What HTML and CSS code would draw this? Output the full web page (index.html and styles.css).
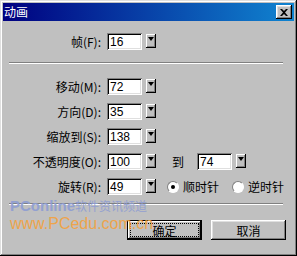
FILE: index.html
```html
<!DOCTYPE html>
<html>
  <head>
    <meta charset="utf-8" />
    <title>动画</title>
    <link rel="stylesheet" href="styles.css">
  </head>
  <body>
    <div class="window">
      <div class="titlebar">
        <span class="title">动画</span>
        <span class="close">
          <svg width="8" height="7" viewBox="0 0 8 7">
            <path d="M0 0h2l2 2 2-2h2L5 3.5 8 7H6L4 5 2 7H0l3-3.5z" fill="#000" />
          </svg>
        </span>
      </div>

      <div class="content">
        <div class="row first">
          <label class="lbl">帧(F):</label>
          <span class="field">16</span>
          <span class="drop"><i></i></span>
        </div>

        <div class="sep top-sep"></div>

        <div class="row">
          <label class="lbl">移动(M):</label>
          <span class="field">72</span>
          <span class="drop"><i></i></span>
        </div>
        <div class="row">
          <label class="lbl">方向(D):</label>
          <span class="field">35</span>
          <span class="drop"><i></i></span>
        </div>
        <div class="row">
          <label class="lbl">缩放到(S):</label>
          <span class="field">138</span>
          <span class="drop"><i></i></span>
        </div>
        <div class="row opacity">
          <label class="lbl">不透明度(O):</label>
          <span class="field">100</span>
          <span class="drop"><i></i></span>
          <span class="to">到</span>
          <span class="field">74</span>
          <span class="drop"><i></i></span>
        </div>
        <div class="row">
          <label class="lbl">旋转(R):</label>
          <span class="field">49</span>
          <span class="drop"><i></i></span>
          <span class="radio checked first-radio"></span>
          <span class="radio-text">顺时针</span>
          <span class="radio second-radio"></span>
          <span class="radio-text">逆时针</span>
        </div>

        <div class="sep bottom-sep"></div>

        <div class="buttons">
          <button class="btn default"><span>确定</span></button>
          <button class="btn">取消</button>
        </div>
      </div>

      <div class="mark">
        <div class="mark-1">PConline<span class="cjk">软件资讯频道</span></div>
        <div class="mark-2">www.PCedu.com.cn</div>
      </div>
    </div>
  </body>
</html>
```

FILE: styles.css
```css
* {
  box-sizing: border-box;
}

body {
  margin: 0;
  font-family: "Liberation Sans", "Noto Sans CJK SC", sans-serif;
  font-size: 12px;
}

.window {
  position: relative;
  width: 297px;
  height: 256px;
  padding: 3px;
  background: #c0c0c0;
  box-shadow: inset -1px -1px #000, inset 1px 1px #dfdfdf,
    inset -2px -2px #808080, inset 2px 2px #fff;
}

.titlebar {
  height: 18px;
  display: flex;
  align-items: center;
  justify-content: space-between;
  padding: 0 2px 0 1px;
  background: linear-gradient(to right, #000080, #1084d0);
  color: #fff;
}

.title {
  font-family: "Noto Sans CJK SC", sans-serif;
  font-size: 12px;
  line-height: 14px;
}

.close {
  width: 16px;
  height: 14px;
  display: flex;
  align-items: center;
  justify-content: center;
  background: #c0c0c0;
  box-shadow: inset -1px -1px #000, inset 1px 1px #fff,
    inset -2px -2px #808080, inset 2px 2px #dfdfdf;
}

.content {
  padding-top: 12px;
}

.row {
  display: flex;
  align-items: flex-start;
  height: 17px;
  margin-bottom: 8px;
}

.row.opacity {
  margin-top: 2px;
}

.lbl {
  width: 98px;
  margin-right: 6px;
  text-align: right;
  font-family: "Noto Sans CJK SC", sans-serif;
  line-height: 17px;
  color: #000;
}

.field {
  width: 35px;
  height: 17px;
  padding: 2px 0 0 3px;
  background: #fff;
  line-height: 14px;
  box-shadow: inset 1px 1px #808080, inset -1px -1px #fff,
    inset 2px 2px #000, inset -2px -2px #dfdfdf;
}

.drop {
  width: 10px;
  height: 14px;
  margin: 1px 0 0 4px;
  display: flex;
  justify-content: center;
  padding-top: 3px;
  background: #c0c0c0;
  box-shadow: inset -1px -1px #000, inset 1px 1px #fff,
    inset -2px -2px #808080;
}

.drop i {
  width: 0;
  height: 0;
  border-left: 3px solid transparent;
  border-right: 3px solid transparent;
  border-top: 4px solid #000;
}

.to {
  margin: 0 13px 0 16px;
  font-family: "Noto Sans CJK SC", sans-serif;
  line-height: 17px;
}

.radio {
  width: 12px;
  height: 12px;
  margin-top: 3px;
  border-radius: 50%;
  background: #fff;
  border: 1px solid;
  border-color: #808080 #fff #fff #808080;
  display: flex;
  align-items: center;
  justify-content: center;
}

.radio.checked::after {
  content: "";
  width: 4px;
  height: 4px;
  border-radius: 50%;
  background: #000;
}

.first-radio {
  margin-left: 11px;
}

.second-radio {
  margin-left: 13px;
}

.radio-text {
  margin-left: 4px;
  font-family: "Noto Sans CJK SC", sans-serif;
  line-height: 17px;
}

.sep {
  height: 2px;
  margin: 0 11px 0 6px;
  border-top: 1px solid #808080;
  border-bottom: 1px solid #fff;
}

.top-sep {
  margin-top: 12px;
  margin-bottom: 14px;
}

.bottom-sep {
  margin-top: 4px;
  margin-bottom: 15px;
}

.buttons {
  display: flex;
  justify-content: flex-end;
  gap: 9px;
  padding-right: 8px;
}

.btn {
  width: 75px;
  height: 20px;
  padding: 0;
  border: none;
  background: #c0c0c0;
  font-family: "Noto Sans CJK SC", sans-serif;
  font-size: 12px;
  color: #000;
  box-shadow: inset -1px -1px #000, inset 1px 1px #fff,
    inset -2px -2px #808080, inset 2px 2px #dfdfdf;
}

.btn.default {
  box-shadow: inset 0 0 0 1px #000, inset -2px -2px #000, inset 2px 2px #fff,
    inset -3px -3px #808080;
  padding: 4px;
}

.btn.default span {
  display: flex;
  align-items: center;
  justify-content: center;
  height: 100%;
  outline: 1px dotted #000;
}

.mark {
  position: absolute;
  left: 10px;
  top: 197px;
  pointer-events: none;
  font-family: "Liberation Sans", "Noto Sans CJK SC", sans-serif;
}

.mark-1 {
  color: #8e9dd3;
  font-size: 15px;
  font-weight: bold;
  line-height: 18px;
  opacity: 0.9;
}

.mark-1 .cjk {
  font-family: "Noto Sans CJK SC", sans-serif;
  font-size: 12px;
  font-weight: normal;
}

.mark-2 {
  color: #f3a23f;
  font-size: 16px;
  line-height: 18px;
  opacity: 0.9;
}
```
